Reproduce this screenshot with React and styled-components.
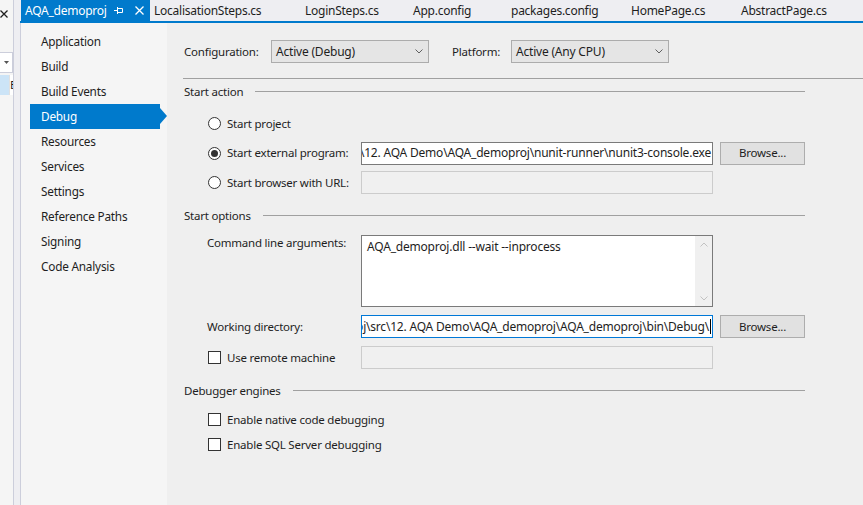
import React from 'react';
import styled, { createGlobalStyle } from 'styled-components';

const Global = createGlobalStyle`
  html, body { margin: 0; padding: 0; }
  body {
    font-family: "Segoe UI", "Noto Sans", "DejaVu Sans", sans-serif;
    font-size: 11.5px;
    letter-spacing: -0.22px;
    color: #1e1e1e;
    background: #eeeef2;
  }
  * { box-sizing: border-box; }
`;

const Window = styled.div`
  width: 863px;
  height: 505px;
  display: flex;
  overflow: hidden;
  background: #eeeef2;
`;

/* ---------- left docked tool window stub ---------- */
const SidePanel = styled.div`
  width: 14px;
  flex: none;
  background: #f5f5f5;
  border-right: 1px solid #cccedb;
  display: flex;
  flex-direction: column;
  overflow: hidden;
  padding-top: 10px;
`;

const PanelClose = styled.svg`
  display: block;
`;

const ComboStub = styled.div`
  margin-top: 34px;
  height: 21px;
  width: 13px;
  background: #fff;
  border: 1px solid #cccedb;
  border-left: none;
  display: flex;
  align-items: center;
  padding-left: 4px;
`;

const TreeRow = styled.div`
  margin-top: 2px;
  height: 20px;
  display: flex;
  align-items: stretch;
`;

const TreeCell = styled.div`
  width: 10px;
  background: #cce4f7;
  border-right: 1px solid #e0e0e0;
`;

const TreeText = styled.div`
  width: 3px;
  overflow: hidden;
  line-height: 20px;
  background: #fff;
  white-space: nowrap;
`;

/* ---------- document well ---------- */
const DocWell = styled.div`
  flex: 1;
  display: flex;
  flex-direction: column;
  padding-left: 6px;
  min-width: 0;
`;

const TabStrip = styled.div`
  height: 21px;
  display: flex;
  padding-left: 1px;
  overflow: hidden;
  flex: none;
`;

const Tab = styled.div`
  flex: none;
  width: ${p => (p.$w ? `${p.$w}px` : 'auto')};
  display: flex;
  align-items: center;
  padding-left: 4px;
  white-space: nowrap;
  font-size: 12px;
  letter-spacing: -0.25px;
  background: ${p => (p.$active ? '#007acc' : 'transparent')};
  color: ${p => (p.$active ? '#ffffff' : '#1e1e1e')};
  padding-bottom: 1px;
`;

const TabTitle = styled.span`
  flex: 1;
`;

const TabIcon = styled.svg`
  display: block;
  flex: none;
  margin-right: ${p => p.$mr || 0}px;
`;

const TabRule = styled.div`
  height: 2px;
  background: #007acc;
  flex: none;
`;

const Document = styled.div`
  flex: 1;
  display: flex;
  border-left: 1px solid #cccedb;
  min-height: 0;
`;

/* ---------- property page nav ---------- */
const PageNav = styled.nav`
  width: 146px;
  flex: none;
  background: #f5f5f5;
  padding: 6px 0 0 9px;
  display: flex;
  flex-direction: column;
`;

const NavItem = styled.div`
  position: relative;
  height: 25px;
  width: 130px;
  line-height: 24px;
  padding-left: 11px;
  font-size: 11.8px;
  background: ${p => (p.$selected ? '#007acc' : 'transparent')};
  color: ${p => (p.$selected ? '#ffffff' : '#1e1e1e')};
  ${p =>
    p.$selected &&
    `
    &::after {
      content: '';
      position: absolute;
      right: -7px;
      top: 4px;
      border-left: 7px solid #007acc;
      border-top: 8px solid transparent;
      border-bottom: 8px solid transparent;
    }
  `}
`;

/* ---------- page content ---------- */
const Content = styled.div`
  flex: 1;
  background: #efefef;
  padding: 17px 0 0 17px;
  min-width: 0;
`;

const ConfigRow = styled.div`
  display: flex;
  align-items: center;
  height: 23px;
`;

const FieldLabel = styled.div`
  width: ${p => p.$w}px;
  margin-left: ${p => p.$ml || 0}px;
  flex: none;
  white-space: nowrap;
`;

const Select = styled.div`
  width: 158px;
  height: 23px;
  flex: none;
  border: 1px solid #acacac;
  background: #e5e5e5;
  display: flex;
  align-items: center;
  justify-content: space-between;
  padding: 0 5px 1px 4px;
  white-space: nowrap;
  font-size: 12px;
  letter-spacing: -0.2px;
`;

const Separator = styled.div`
  height: 1px;
  background: #a0a0a0;
  margin: 15px 0 0 -1px;
`;

const Section = styled.section`
  width: 621px;
`;

const GroupHeader = styled.div`
  display: flex;
  align-items: center;
  height: 16px;
  margin-top: ${p => p.$mt}px;
  white-space: nowrap;
  &::after {
    content: '';
    flex: 1;
    height: 1px;
    background: #a0a0a0;
    margin-left: 12px;
  }
`;

const FormGrid = styled.div`
  display: grid;
  grid-template-columns: 146px 352px 85px;
  column-gap: 7px;
  row-gap: ${p => p.$gap}px;
  padding-left: 24px;
  margin-top: ${p => p.$mt}px;
`;

const RowLabel = styled.label`
  grid-column: 1;
  display: flex;
  align-items: ${p => (p.$top ? 'flex-start' : 'center')};
  height: ${p => (p.$top ? 'auto' : '23px')};
  gap: 6px;
  margin-left: ${p => p.$ml || 0}px;
  white-space: nowrap;
  line-height: 16px;
`;

const Radio = styled.span`
  width: 13px;
  height: 13px;
  flex: none;
  border-radius: 50%;
  border: 1px solid #333333;
  background: #ffffff;
  display: flex;
  align-items: center;
  justify-content: center;
  &::after {
    content: '';
    width: 7px;
    height: 7px;
    border-radius: 50%;
    background: ${p => (p.$checked ? '#333333' : 'transparent')};
  }
`;

const Check = styled.span`
  width: 13px;
  height: 13px;
  flex: none;
  border: 1px solid #333333;
  background: #ffffff;
`;

const TextBox = styled.div`
  grid-column: 2;
  height: ${p => p.$h || 23}px;
  border: 1px solid
    ${p => (p.$disabled ? '#cccccc' : p.$focused ? '#0078d7' : '#7a7a7a')};
  background: ${p => (p.$disabled ? '#f0f0f0' : '#ffffff')};
  display: flex;
  align-items: center;
  justify-content: flex-end;
  overflow: hidden;
  white-space: nowrap;
  padding: 0 1px 1px 2px;
  font-size: 12px;
  letter-spacing: -0.2px;
`;

const Caret = styled.span`
  width: 1px;
  height: 15px;
  background: #000;
  flex: none;
  margin-left: 1px;
`;

const Button = styled.button`
  grid-column: 3;
  height: 23px;
  border: 1px solid #adadad;
  background: #e1e1e1;
  font: inherit;
  letter-spacing: inherit;
  color: #1e1e1e;
  padding: 0 0 1px;
`;

const TextArea = styled.div`
  grid-column: 2;
  height: 72px;
  border: 1px solid #7a7a7a;
  background: #ffffff;
  display: flex;
`;

const AreaText = styled.div`
  flex: 1;
  padding: 3px 5px;
  white-space: nowrap;
  line-height: 16px;
  font-size: 12px;
  letter-spacing: -0.2px;
`;

const ScrollBar = styled.div`
  width: 17px;
  flex: none;
  background: #f0f0f0;
  display: flex;
  flex-direction: column;
  justify-content: space-between;
  align-items: center;
  padding: 6px 0 5px;
`;

const CheckList = styled.div`
  display: flex;
  flex-direction: column;
  gap: 6px;
  padding-left: 24px;
  margin-top: 12px;
`;

const CheckRow = styled.label`
  display: flex;
  align-items: center;
  gap: 6px;
  height: 19px;
  white-space: nowrap;
`;

const Chevron = ({ up, color = '#606060' }) => (
  <svg width="8" height="5" viewBox="0 0 8 5">
    <path
      d={up ? 'M0.5 4.5 L4 1 L7.5 4.5' : 'M0.5 0.5 L4 4 L7.5 0.5'}
      fill="none"
      stroke={color}
      strokeWidth="1"
    />
  </svg>
);

const tabs = [
  { title: 'AQA_demoproj', w: 129, active: true },
  { title: 'LocalisationSteps.cs', w: 151 },
  { title: 'LoginSteps.cs', w: 108 },
  { title: 'App.config', w: 98 },
  { title: 'packages.config', w: 120 },
  { title: 'HomePage.cs', w: 110 },
  { title: 'AbstractPage.cs', w: 140 },
];

const navItems = [
  'Application',
  'Build',
  'Build Events',
  'Debug',
  'Resources',
  'Services',
  'Settings',
  'Reference Paths',
  'Signing',
  'Code Analysis',
];

export default function App() {
  return (
    <>
      <Global />
      <Window>
        <SidePanel>
          <PanelClose width="8" height="8" viewBox="0 0 8 8">
            <path d="M0.5 0.5 L7.5 7.5 M7.5 0.5 L0.5 7.5" stroke="#1e1e1e" strokeWidth="1.3" />
          </PanelClose>
          <ComboStub>
            <svg width="5" height="3" viewBox="0 0 5 3">
              <path d="M0 0 L5 0 L2.5 3 Z" fill="#555" />
            </svg>
          </ComboStub>
          <TreeRow>
            <TreeCell />
            <TreeText>E</TreeText>
          </TreeRow>
        </SidePanel>

        <DocWell>
          <TabStrip>
            {tabs.map(t => (
              <Tab key={t.title} $w={t.w} $active={t.active}>
                <TabTitle>{t.title}</TabTitle>
                {t.active && (
                  <>
                    <TabIcon $mr={12} width="9" height="7" viewBox="0 0 9 7">
                      <path d="M0 3.5 H3 M3.5 0 V7 M3.5 1.5 H8.5 V5.5 H3.5" fill="none" stroke="#fff" strokeWidth="1" />
                    </TabIcon>
                    <TabIcon $mr={6} width="9" height="9" viewBox="0 0 9 9">
                      <path d="M0.5 0.5 L8.5 8.5 M8.5 0.5 L0.5 8.5" stroke="#fff" strokeWidth="1.3" />
                    </TabIcon>
                  </>
                )}
              </Tab>
            ))}
          </TabStrip>
          <TabRule />

          <Document>
            <PageNav>
              {navItems.map(n => (
                <NavItem key={n} $selected={n === 'Debug'}>
                  {n}
                </NavItem>
              ))}
            </PageNav>

            <Content>
              <ConfigRow>
                <FieldLabel $w={87}>Configuration:</FieldLabel>
                <Select>
                  <span>Active (Debug)</span>
                  <Chevron />
                </Select>
                <FieldLabel $w={59} $ml={23}>Platform:</FieldLabel>
                <Select>
                  <span>Active (Any CPU)</span>
                  <Chevron />
                </Select>
              </ConfigRow>
              <Separator />

              <Section>
                <GroupHeader $mt={4}>Start action</GroupHeader>
                <FormGrid $gap={6.5} $mt={13}>
                  <RowLabel>
                    <Radio />
                    Start project
                  </RowLabel>
                  <span />
                  <span />
                  <RowLabel>
                    <Radio $checked />
                    Start external program:
                  </RowLabel>
                  <TextBox>
                    C:\Users\tester\source\repos\src\12. AQA Demo\AQA_demoproj\nunit-runner\nunit3-console.exe
                  </TextBox>
                  <Button>Browse...</Button>
                  <RowLabel>
                    <Radio />
                    Start browser with URL:
                  </RowLabel>
                  <TextBox $disabled />
                  <span />
                </FormGrid>

                <GroupHeader $mt={13}>Start options</GroupHeader>
                <FormGrid $gap={8} $mt={12}>
                  <RowLabel $top $ml={-1}>Command line arguments:</RowLabel>
                  <TextArea>
                    <AreaText>AQA_demoproj.dll --wait --inprocess</AreaText>
                    <ScrollBar>
                      <Chevron up color="#c2c2c2" />
                      <Chevron color="#c2c2c2" />
                    </ScrollBar>
                  </TextArea>
                  <span />
                  <RowLabel $ml={-1}>Working directory:</RowLabel>
                  <TextBox $focused>
                    C:\Users\tester\source\repos\aqaproj\src\12. AQA Demo\AQA_demoproj\AQA_demoproj\bin\Debug\
                    <Caret />
                  </TextBox>
                  <Button>Browse...</Button>
                  <RowLabel>
                    <Check />
                    Use remote machine
                  </RowLabel>
                  <TextBox $disabled $h={23} />
                  <span />
                </FormGrid>

                <GroupHeader $mt={13}>Debugger engines</GroupHeader>
                <CheckList>
                  <CheckRow>
                    <Check />
                    Enable native code debugging
                  </CheckRow>
                  <CheckRow>
                    <Check />
                    Enable SQL Server debugging
                  </CheckRow>
                </CheckList>
              </Section>
            </Content>
          </Document>
        </DocWell>
      </Window>
    </>
  );
}
